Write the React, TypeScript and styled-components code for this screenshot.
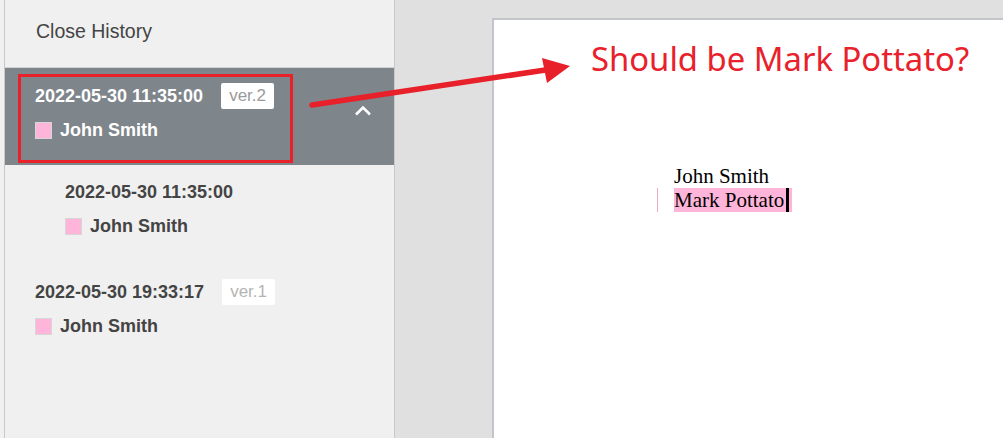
import React from "react";
import styled, { createGlobalStyle } from "styled-components";

const GlobalStyle = createGlobalStyle`
    html, body {
        margin: 0;
        height: 100%;
        background-color: #f0f0f0;
        overflow: hidden;
    }

    #root {
        height: 100%;
    }
`;

const Screen = styled.div`
    position: relative;
    display: flex;
    height: 100vh;
    font-family: "Liberation Sans", Arial, sans-serif;
`;

const Sidebar = styled.aside`
    display: flex;
    flex-direction: column;
    width: 391px;
    margin-left: 4px;
    box-sizing: border-box;
    border-left: 1px solid #c9c9c9;
    border-right: 1px solid #c9c9c9;
    background-color: #f0f0f0;
`;

const SidebarHeader = styled.header`
    display: flex;
    align-items: center;
    height: 63px;
    padding: 0 0 4px 31px;
    border-bottom: 1px solid #d2d2d2;

    color: #444;
    font-size: 19.5px;
`;

const SelectedRow = styled.div`
    display: flex;
    justify-content: space-between;
    align-items: flex-start;
    height: 97px;
    box-sizing: border-box;
    padding: 6px 22px 0 13px;
    background-color: #7e858b;
`;

const Highlight = styled.div`
    width: 275px;
    height: 89px;
    box-sizing: border-box;
    border: 3px solid #e8212b;
    padding: 6px 0 0 14px;
`;

const Chevron = styled.svg`
    margin-top: 31px;
`;

const Entry = styled.div<{ $indent: number; $top: number }>`
    padding: ${(p) => p.$top}px 0 0 ${(p) => p.$indent}px;
`;

const DateRow = styled.div<{ $light?: boolean }>`
    display: flex;
    align-items: center;
    gap: 18px;
    height: 26px;

    color: ${(p) => (p.$light ? "#fff" : "#444")};
    font-size: 18px;
    font-weight: bold;
`;

const VersionBadge = styled.span<{ $muted?: boolean }>`
    display: inline-flex;
    align-items: center;
    height: 26px;
    padding: 0 8px;
    border-radius: 2px;
    background-color: #fff;

    color: ${(p) => (p.$muted ? "#b4b4b4" : "#9a9a9a")};
    font-size: 17px;
    font-weight: normal;
`;

const NameRow = styled.div<{ $light?: boolean }>`
    display: flex;
    align-items: center;
    gap: 8px;
    margin-top: 13px;
    height: 17px;

    color: ${(p) => (p.$light ? "#fff" : "#444")};
    font-size: 18px;
    font-weight: bold;
`;

const Swatch = styled.span`
    width: 15px;
    height: 15px;
    border: 1px solid #d6d6d6;
    background-color: #ffb5d9;
`;

const Workspace = styled.main`
    flex: 1;
    display: flex;
    padding: 18px 0 0 97px;
    background-color: #e0e0e0;
`;

const Page = styled.section`
    flex: 1;
    border-top: 2px solid #c2c6ca;
    border-left: 2px solid #c2c6ca;
    background-color: #fff;
`;

const Note = styled.h2`
    margin: 19px 0 0 97px;
    line-height: 40px;

    color: #e8212b;
    font-family: "Noto Sans", "Open Sans", sans-serif;
    font-size: 32.8px;
    font-weight: normal;
`;

const Doc = styled.div`
    margin: 85px 0 0 163px;

    font-family: "Liberation Serif", "Times New Roman", serif;
    font-size: 21px;
    line-height: 24px;
    color: #000;
`;

const DocLine = styled.div<{ $changed?: boolean }>`
    display: flex;
    height: 24px;
    padding-left: 16px;
    border-left: 1px solid ${(p) => (p.$changed ? "#f4a9cc" : "transparent")};
`;

const Inserted = styled.span`
    display: inline-flex;
    align-items: center;
    padding-right: 3px;
    background-color: #ffb5d9;
`;

const Caret = styled.span`
    width: 3px;
    height: 24px;
    margin-left: 2px;
    background-color: #000;
`;

const Overlay = styled.svg`
    position: absolute;
    inset: 0;
    pointer-events: none;
`;

type EntryProps = {
    date: string;
    version?: string;
    name: string;
    light?: boolean;
    mutedBadge?: boolean;
};

function EntryBody(props: EntryProps): React.ReactElement {
    return (
        <>
            <DateRow $light={props.light}>
                <span>{props.date}</span>
                {props.version && <VersionBadge $muted={props.mutedBadge}>{props.version}</VersionBadge>}
            </DateRow>
            <NameRow $light={props.light}>
                <Swatch />
                <span>{props.name}</span>
            </NameRow>
        </>
    );
}

export default function App(): React.ReactElement {
    return (
        <Screen>
            <GlobalStyle />
            <Sidebar>
                <SidebarHeader>Close History</SidebarHeader>
                <SelectedRow>
                    <Highlight>
                        <EntryBody date="2022-05-30 11:35:00" version="ver.2" name="John Smith" light />
                    </Highlight>
                    <Chevron width="18" height="11" viewBox="0 0 18 11">
                        <polyline points="2,9.5 9,2.5 16,9.5" fill="none" stroke="#fff" strokeWidth="2.6" />
                    </Chevron>
                </SelectedRow>
                <Entry $indent={60} $top={14}>
                    <EntryBody date="2022-05-30 11:35:00" name="John Smith" />
                </Entry>
                <Entry $indent={30} $top={44}>
                    <EntryBody date="2022-05-30 19:33:17" version="ver.1" name="John Smith" mutedBadge />
                </Entry>
            </Sidebar>
            <Workspace>
                <Page>
                    <Note>Should be Mark Pottato?</Note>
                    <Doc>
                        <DocLine>John Smith</DocLine>
                        <DocLine $changed>
                            <Inserted>
                                Mark Pottato
                                <Caret />
                            </Inserted>
                        </DocLine>
                    </Doc>
                </Page>
            </Workspace>
            <Overlay width="1003" height="438" viewBox="0 0 1003 438">
                <line x1="312" y1="105" x2="552" y2="69" stroke="#e8202a" strokeWidth="5.5" strokeLinecap="round" />
                <polygon points="570,66 542,58 547,83" fill="#e8202a" />
            </Overlay>
        </Screen>
    );
}
